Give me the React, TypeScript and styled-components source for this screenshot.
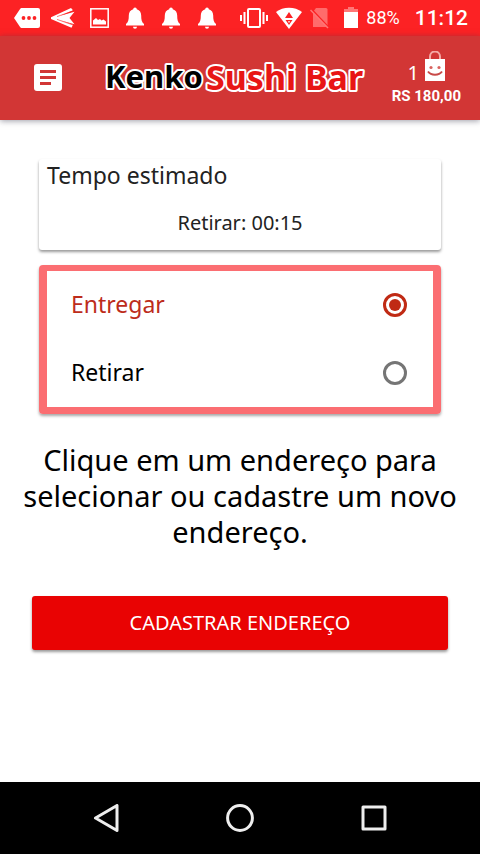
import React, { useState } from "react";
import styled, { createGlobalStyle } from "styled-components";

const GlobalStyle = createGlobalStyle`
  * { box-sizing: border-box; }
  body { margin: 0; background: #fff; font-family: "Noto Sans", sans-serif; }
`;

const Screen = styled.div`
  min-height: 100vh;
  display: flex;
  flex-direction: column;
`;

const StatusBar = styled.div`
  height: 36px;
  padding: 0 12px 0 9px;
  display: flex;
  align-items: center;
  justify-content: space-between;
  background: #fc2224;
  color: #fff;
  font-family: Roboto, sans-serif;
`;

const Notifications = styled.div`
  display: grid;
  grid-auto-flow: column;
  grid-auto-columns: 36px;
  place-items: center;
  svg { display: block; }
`;

const SystemStatus = styled.div`
  display: flex;
  align-items: center;
  gap: 8px;
  svg { display: block; }
`;

const Battery = styled.span`
  font-size: 18px;
  line-height: 38px;
`;

const Clock = styled.span`
  margin-left: 7px;
  font-size: 21px;
  font-weight: 500;
  line-height: 38px;
`;

const Header = styled.header`
  height: 84px;
  padding: 0 19px 0 34px;
  display: flex;
  align-items: center;
  justify-content: space-between;
  background: #d23635;
  box-shadow: 0 1px 6px rgba(60, 60, 80, 0.5);
`;

const IconButton = styled.button`
  padding: 0;
  border: 0;
  background: none;
  color: #fff;
  cursor: pointer;
  svg { display: block; }
`;

const Logo = styled.svg`
  display: block;
  margin-left: 17px;
  font-family: "Noto Sans", sans-serif;
  font-weight: 700;
  stroke: #fff;
  stroke-width: 4px;
  stroke-linejoin: round;
  paint-order: stroke;
`;

const CartButton = styled.button`
  padding: 0;
  border: 0;
  background: none;
  color: #fff;
  font-family: Roboto, sans-serif;
  cursor: pointer;
`;

const CartTop = styled.span`
  height: 36px;
  display: flex;
  align-items: flex-end;
  justify-content: center;
  gap: 6px;
  font-family: "Noto Sans", sans-serif;
  font-size: 20px;
  line-height: 28px;
  svg { display: block; margin-bottom: 6px; }
`;

const CartTotal = styled.span`
  display: block;
  font-size: 15px;
  font-weight: 700;
  line-height: 18px;
`;

const Main = styled.main`
  flex: 1;
  padding: 39px 32px 24px;
  display: flex;
  flex-direction: column;
`;

const Card = styled.section`
  height: 91px;
  margin: 0 7px 15px;
  padding: 0 8px;
  border-radius: 3px;
  box-shadow: 0 2px 3px rgba(0, 0, 0, 0.4);
  color: #222;
`;

const CardTitle = styled.h2`
  margin: 0;
  font-size: 23px;
  font-weight: 400;
  line-height: 32px;
`;

const CardValue = styled.p`
  margin: 17px 0 0;
  font-size: 20px;
  line-height: 30px;
  text-align: center;
`;

const Options = styled.fieldset`
  min-width: 0;
  margin: 0 7px;
  padding: 0 26px 0 24px;
  border: solid #fb6e72;
  border-width: 6px 8px 7px;
  border-radius: 4px;
  box-shadow: 0 2px 3px rgba(0, 0, 0, 0.35);
`;

const Option = styled.label<{ $active: boolean }>`
  height: 68px;
  display: flex;
  align-items: center;
  justify-content: space-between;
  color: ${(p) => (p.$active ? "#bd2c1b" : "#000")};
  font-size: 23px;
  line-height: 32px;
  cursor: pointer;
`;

const OptionText = styled.span`
  padding-bottom: 2px;
`;

const Radio = styled.input`
  appearance: none;
  width: 24px;
  height: 24px;
  margin: 0;
  border: 3px solid #757575;
  border-radius: 50%;
  display: grid;
  place-items: center;
  &:checked { border-color: #c02a14; }
  &:checked::before {
    content: "";
    width: 12px;
    height: 12px;
    border-radius: 50%;
    background: #c02a14;
  }
`;

const Message = styled.p`
  margin: 28px -16px 46px;
  color: #000;
  font-size: 29px;
  line-height: 36px;
  text-align: center;
`;

const Primary = styled.button`
  height: 54px;
  border: 0;
  border-radius: 3px;
  background: #e90303;
  color: #fff;
  box-shadow: 0 2px 3px rgba(0, 0, 0, 0.4);
  font-family: "Noto Sans", sans-serif;
  font-size: 20px;
  line-height: 30px;
  cursor: pointer;
`;

const NavBar = styled.nav`
  height: 72px;
  padding: 0 92px;
  display: flex;
  align-items: center;
  justify-content: space-between;
  background: #000;
`;

const Bell = () => (
  <svg width="20" height="24" viewBox="0 0 20 24" fill="#fff">
    <path d="M8.2 3.2a1.8 1.8 0 0 1 3.6 0c3 .8 4.4 3.3 4.4 6.3 0 4.200.4 6.400 2.800 8.500v1.500H1V18c2.400-2.100 2.800-4.300 2.800-8.500 0-3 1.400-5.500 4.400-6.300ZM8 20.700h4a2 2 0 0 1-4 0Z" />
  </svg>
);

const NotificationIcons = () => (
  <Notifications>
    <svg width="26" height="20" viewBox="0 0 26 20">
      <path d="M8 0h16a2 2 0 0 1 2 2v16a2 2 0 0 1-2 2H8c-1 0-1.600-.4-2.100-1.200L0 10l5.900-8.800C6.400.4 7 0 8 0Z" fill="#fff" />
      <g fill="#fc2224"><circle cx="9.500" cy="10" r="1.900" /><circle cx="15" cy="10" r="1.900" /><circle cx="20.500" cy="10" r="1.900" /></g>
    </svg>
    <svg width="24" height="20" viewBox="0 0 24 20" fill="#fff">
      <path d="M0 9.300 20 0l2 2.300L9 7.800 23.500 3.700 18.500 10l5 6.300L9 12.200l13 4.500-1.500 3L0 11Z" />
      <path d="M6 8.600 22 3M6 11.400l16 5.600" stroke="#fc2224" strokeWidth=".6" />
    </svg>
    <svg width="19" height="20" viewBox="0 0 19 20">
      <rect x=".8" y=".8" width="17.400" height="18.400" fill="none" stroke="#fff" strokeWidth="1.500" />
      <path d="M3 16.500v-4l3-2.500 2 2 2-1 1.500 1.500 2-1 2.500 2v3Z" fill="#fff" />
    </svg>
    <Bell />
    <Bell />
    <Bell />
  </Notifications>
);

const SystemIcons = () => (
  <SystemStatus>
    <svg width="28" height="22" viewBox="0 0 28 22" fill="none" stroke="#fff" strokeWidth="2">
      <rect x="8" y="2" width="12" height="18" rx="1" />
      <path d="M4.500 5v12M23.500 5v12M1 8v6M27 8v6" />
    </svg>
    <svg width="26" height="22" viewBox="0 0 26 22">
      <path d="M0 5C7-.8 19-.8 26 5L13 22Z" fill="#fff" />
      <path d="m13 5 4 6H9ZM9.500 13h7L13 18Z" fill="#fc2224" />
      <path d="M11.800 14.200h2.400L13 16Z" fill="#fff" />
    </svg>
    <svg width="26" height="22" viewBox="0 0 26 22">
      <path d="M6 1h10a1.500 1.500 0 0 1 1.500 1.500V20H3V5Z" fill="#ff6b6b" />
      <path d="m1.500 2.500 17 18" stroke="#fc2224" strokeWidth="2" />
      <path d="m.5 3 17.500 18" stroke="#ff7777" strokeWidth="1.500" />
    </svg>
    <svg width="14" height="22" viewBox="0 0 14 22">
      <path d="M4 0h6v2h4v3H0V2h4Z" fill="#ff7777" />
      <path d="M0 5h14v16H0Z" fill="#fff" />
    </svg>
    <Battery>88%</Battery>
    <Clock>11:12</Clock>
  </SystemStatus>
);

type Mode = "entregar" | "retirar";
const modes: { id: Mode; label: string }[] = [
  { id: "entregar", label: "Entregar" },
  { id: "retirar", label: "Retirar" },
];

export default function App() {
  const [mode, setMode] = useState<Mode>("entregar");
  return (
    <Screen>
      <GlobalStyle />
      <StatusBar>
        <NotificationIcons />
        <SystemIcons />
      </StatusBar>
      <Header>
        <IconButton aria-label="Menu">
          <svg width="28" height="28" viewBox="0 0 28 28">
            <rect width="28" height="27" rx="3" fill="#fff" />
            <path d="M6 7.500h16M6 13.500h16M6 19.500h11" stroke="#d23635" strokeWidth="3" />
          </svg>
        </IconButton>
        <Logo width="270" height="56" viewBox="0 0 270 56" role="img" aria-label="Kenko Sushi Bar">
          <text x="5" y="38" fontSize="31" fill="#000">Kenko</text>
          <text x="106" y="40" fontSize="34" fill="#e81515">Sushi Bar</text>
        </Logo>
        <CartButton>
          <CartTop>
            1
            <svg width="20" height="30" viewBox="0 0 20 30">
              <path d="M5 9V5.500a5 5 0 0 1 10 0V9" fill="none" stroke="#f5a9a5" strokeWidth="2" />
              <path d="M0 8h20v22H0Z" fill="#fff" />
              <g fill="#d9635f"><circle cx="6" cy="16.500" r="1.600" /><circle cx="14" cy="16.500" r="1.600" /></g>
              <path d="M3 20.500c3 4.300 11 4.300 14 0" fill="none" stroke="#c84a48" strokeWidth="2" />
            </svg>
          </CartTop>
          <CartTotal>RS 180,00</CartTotal>
        </CartButton>
      </Header>
      <Main>
        <Card>
          <CardTitle>Tempo estimado</CardTitle>
          <CardValue>Retirar: 00:15</CardValue>
        </Card>
        <Options aria-label="Forma de recebimento">
          {modes.map((m) => (
            <Option key={m.id} $active={mode === m.id}>
              <OptionText>{m.label}</OptionText>
              <Radio type="radio" name="mode" checked={mode === m.id} onChange={() => setMode(m.id)} />
            </Option>
          ))}
        </Options>
        <Message>Clique em um endereço para selecionar ou cadastre um novo endereço.</Message>
        <Primary>CADASTRAR ENDEREÇO</Primary>
      </Main>
      <NavBar>
        <IconButton aria-label="Voltar">
          <svg width="28" height="28" viewBox="0 0 28 28" fill="none" stroke="#eee" strokeWidth="3" strokeLinejoin="round">
            <path d="M25 1.500v25L3.500 14Z" />
          </svg>
        </IconButton>
        <IconButton aria-label="Início">
          <svg width="28" height="28" viewBox="0 0 28 28" fill="none" stroke="#eee" strokeWidth="3">
            <circle cx="14" cy="14" r="12.400" />
          </svg>
        </IconButton>
        <IconButton aria-label="Recentes">
          <svg width="28" height="28" viewBox="0 0 28 28" fill="none" stroke="#eee" strokeWidth="3" strokeLinejoin="round">
            <rect x="3" y="3" width="22" height="22" />
          </svg>
        </IconButton>
      </NavBar>
    </Screen>
  );
}
